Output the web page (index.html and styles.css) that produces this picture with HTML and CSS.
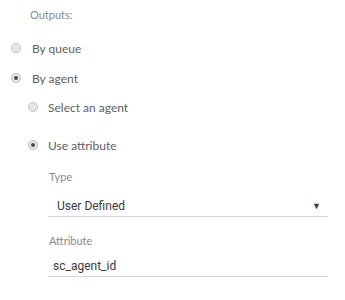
FILE: index.html
```html
<!DOCTYPE html>
<html lang="en">
<head>
  <meta charset="UTF-8">
  <title>Outputs</title>
  <link rel="stylesheet" href="styles.css">
</head>
<body>
  <div class="panel">
    <div class="heading">Outputs:</div>

    <!-- Top level choice -->
    <div class="option option-queue">
      <span class="radio"></span>
      <span class="option-label">By queue</span>
    </div>
    <div class="option option-agent">
      <span class="radio checked"></span>
      <span class="option-label">By agent</span>
    </div>

    <!-- Agent sub options -->
    <div class="sub">
      <div class="option option-select">
        <span class="radio"></span>
        <span class="option-label">Select an agent</span>
      </div>
      <div class="option option-attr">
        <span class="radio checked"></span>
        <span class="option-label">Use attribute</span>
      </div>

      <div class="fields">
        <div class="field-label label-type">Type</div>
        <div class="select">
          <span class="select-value">User Defined</span>
          <span class="select-arrow">&#9660;</span>
        </div>

        <div class="field-label label-attr">Attribute</div>
        <div class="input">sc_agent_id</div>
      </div>
    </div>
  </div>
</body>
</html>
```

FILE: styles.css
```css
/* Base styling */
* {
  margin: 0;
  padding: 0;
  box-sizing: border-box;
}

body {
  background-color: #fff;
  font-family: 'Lato', 'Noto Sans', sans-serif;
  color: #555;
}

.panel {
  display: flex;
  flex-direction: column;
  padding-top: 5px;
}

.heading {
  height: 20px;
  line-height: 20px;
  margin-left: 30px;
  font-size: 11px;
  color: #8a8a8a;
}

/* Radio rows */
.option {
  display: flex;
  align-items: center;
  height: 20px;
  gap: 11px;
  padding-left: 11px;
}

.option-queue {
  margin-top: 13px;
}

.option-agent {
  margin-top: 10px;
}

.option-label {
  font-size: 12px;
  color: #606060;
}

.radio {
  width: 10px;
  height: 10px;
  border-radius: 50%;
  border: 1px solid #c4c4c4;
  background-color: #e6e6e6;
  position: relative;
  flex-shrink: 0;
}

.radio.checked {
  background-color: #eaeaea;
  border-color: #b8b8b8;
}

.radio.checked::after {
  content: '';
  position: absolute;
  left: 2px;
  top: 2px;
  width: 4px;
  height: 4px;
  border-radius: 50%;
  background-color: #4a4a4a;
}

/* Nested options */
.sub {
  display: flex;
  flex-direction: column;
}

.sub .option {
  padding-left: 28px;
  gap: 10px;
}

.option-select {
  margin-top: 9px;
}

.option-attr {
  margin-top: 18px;
}

/* Fields */
.fields {
  display: flex;
  flex-direction: column;
  margin-left: 48px;
  width: 280px;
}

.field-label {
  height: 20px;
  line-height: 20px;
  font-size: 11px;
  color: #8a8a8a;
  padding-left: 1px;
}

.label-type {
  margin-top: 12px;
}

.label-attr {
  margin-top: 14px;
}

.select {
  display: flex;
  align-items: center;
  justify-content: space-between;
  height: 22px;
  margin-top: 8px;
  padding: 0 7px 0 9px;
  border-bottom: 1px solid #d8d8d8;
  font-family: 'Roboto', 'Liberation Sans', sans-serif;
  font-size: 12px;
  color: #3a3a3a;
}

.select-arrow {
  font-size: 9px;
  color: #3a3a3a;
}

.input {
  height: 20px;
  line-height: 18px;
  margin-top: 6px;
  padding-left: 5px;
  border-bottom: 1px solid #d8d8d8;
  font-family: 'Roboto', 'Liberation Sans', sans-serif;
  font-size: 12px;
  color: #3a3a3a;
}
```
